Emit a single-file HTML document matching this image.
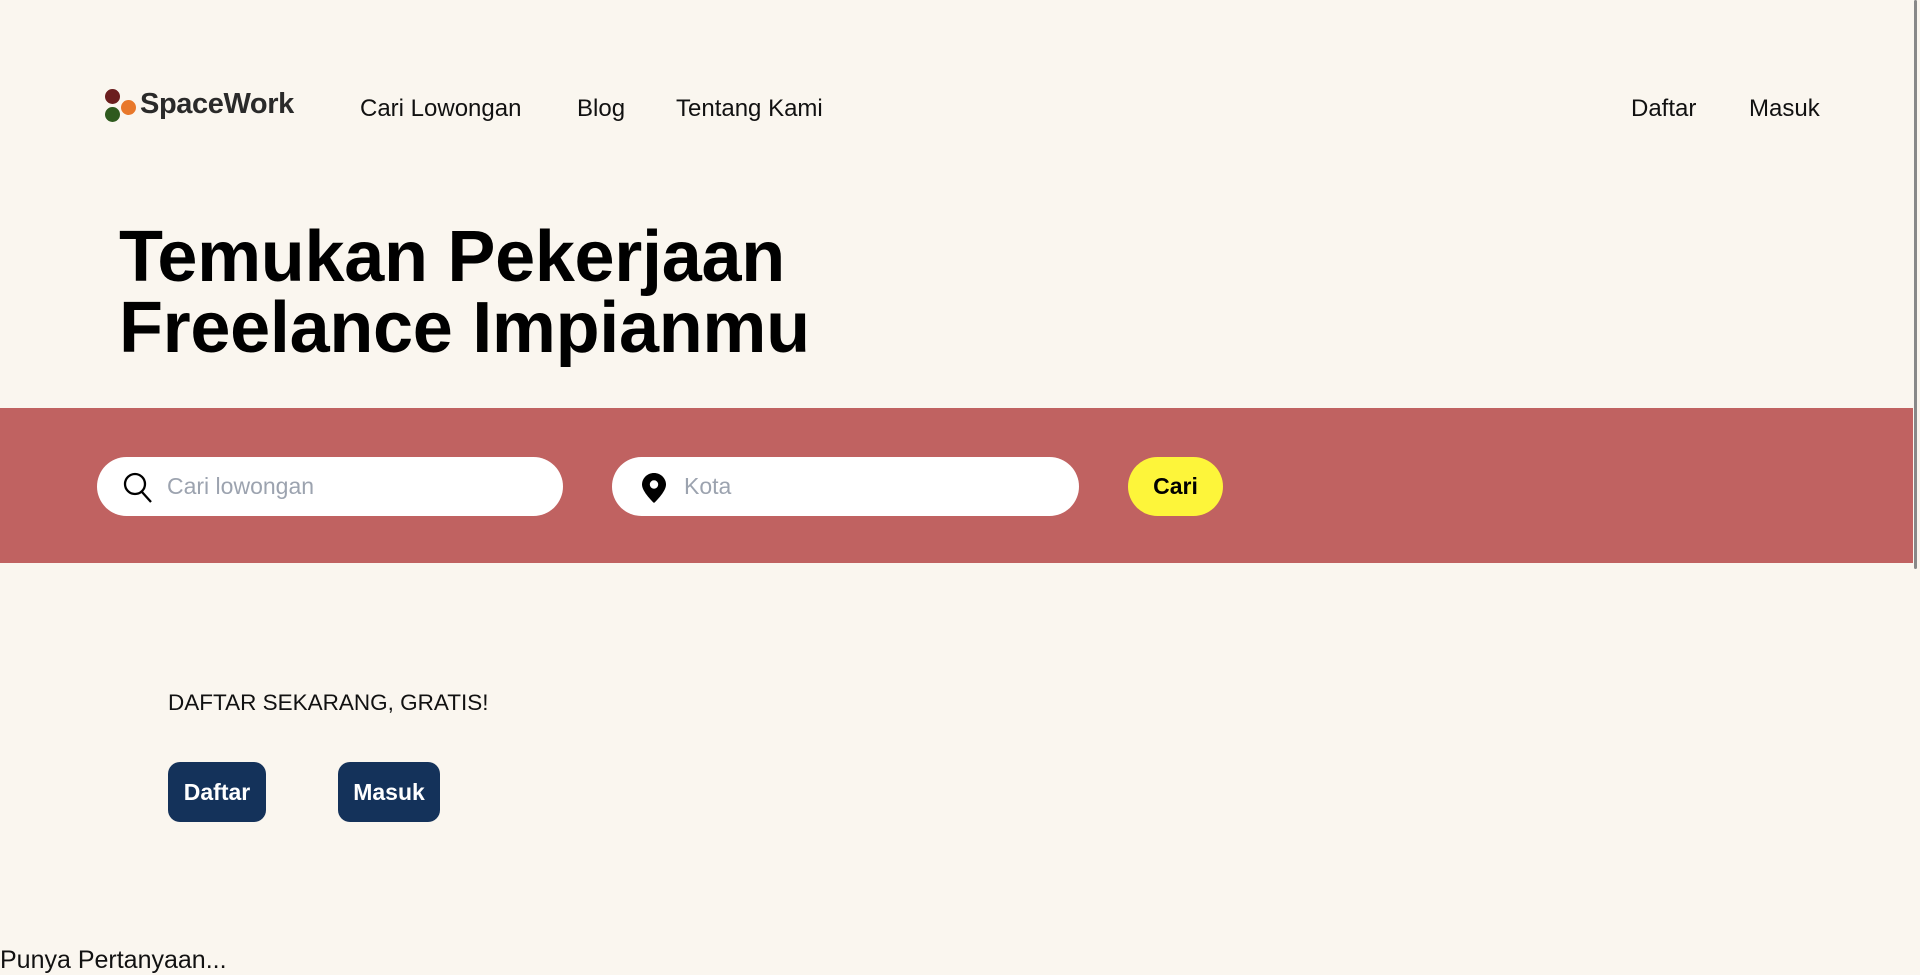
<!DOCTYPE html>
<html><head><meta charset="utf-8"><style>
*{margin:0;padding:0;box-sizing:border-box}
body{width:1920px;height:972px;overflow:hidden;background:#FAF6EF;font-family:"Liberation Sans",sans-serif;color:#111;position:relative}
.a{position:absolute;white-space:nowrap}
.nav{font-size:24px;top:95px}
.dot{position:absolute;border-radius:50%;width:15px;height:15px}
.inp{position:absolute;background:#fff;border-radius:30px;top:457px;height:59px}
.ph{position:absolute;left:70px;top:16px;font-size:23px;color:#9CA3AF}
.btn{position:absolute;background:#14325A;color:#fff;font-weight:bold;font-size:23px;border-radius:12px;top:762px;height:60px;line-height:60px;text-align:center}
</style></head><body>
<div class="dot" style="left:105px;top:89px;background:#6B1E1E"></div>
<div class="dot" style="left:121px;top:100px;background:#E8782B"></div>
<div class="dot" style="left:105px;top:107px;background:#2E5A1E"></div>
<div class="a" style="left:140px;top:88px;font-size:29px;font-weight:bold;color:#2a2a2a;letter-spacing:-0.4px">SpaceWork</div>
<div class="a nav" style="left:360px">Cari Lowongan</div>
<div class="a nav" style="left:577px">Blog</div>
<div class="a nav" style="left:676px">Tentang Kami</div>
<div class="a nav" style="left:1631px">Daftar</div>
<div class="a nav" style="left:1749px">Masuk</div>
<div class="a" style="left:119px;top:222px;font-size:72px;font-weight:bold;line-height:71px;color:#000;letter-spacing:-0.3px">Temukan Pekerjaan<br>Freelance Impianmu</div>
<div style="position:absolute;left:0;top:408px;width:1913px;height:155px;background:#C06261"></div>
<div class="inp" style="left:97px;width:466px">
<svg style="position:absolute;left:26px;top:15px" width="30" height="32" viewBox="0 0 30 32"><circle cx="12" cy="12" r="10" fill="none" stroke="#000" stroke-width="2.3"/><line x1="19" y1="20" x2="28" y2="30" stroke="#000" stroke-width="2.3"/></svg>
<div class="ph">Cari lowongan</div></div>
<div class="inp" style="left:612px;width:467px">
<svg style="position:absolute;left:30px;top:16px" width="24" height="30" viewBox="0 0 24 30"><path d="M12 0C5.4 0 0 5.2 0 11.6 0 19 12 30 12 30S24 19 24 11.6C24 5.2 18.6 0 12 0z" fill="#000"/><circle cx="12" cy="11.5" r="4.2" fill="#fff"/></svg>
<div class="ph" style="left:72px">Kota</div></div>
<div style="position:absolute;left:1128px;top:457px;width:95px;height:59px;border-radius:30px;background:#FDF53A;font-weight:bold;font-size:23px;line-height:59px;text-align:center;color:#000">Cari</div>
<div class="a" style="left:168px;top:690px;font-size:22.5px">DAFTAR SEKARANG, GRATIS!</div>
<div class="btn" style="left:168px;width:98px">Daftar</div>
<div class="btn" style="left:338px;width:102px">Masuk</div>
<div class="a" style="left:0;top:946px;font-size:25px">Punya Pertanyaan...</div>
<div style="position:absolute;left:1914px;top:0;width:3px;height:569px;background:#888;border-radius:2px"></div>
</body></html>
